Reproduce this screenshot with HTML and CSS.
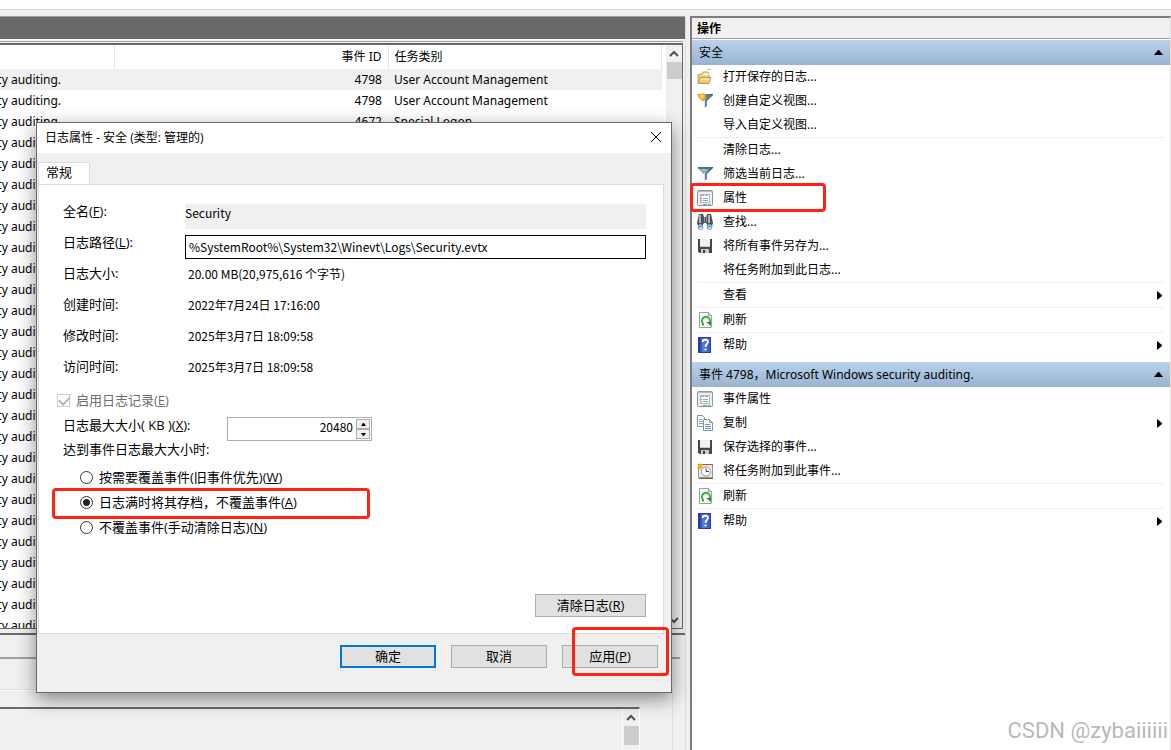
FILE: index.html
```html
<!DOCTYPE html>
<html lang="zh-CN">
<head>
<meta charset="utf-8">
<title>事件查看器</title>
<link rel="stylesheet" href="styles.css">
</head>
<body>
<svg class="defs" aria-hidden="true">
  <defs>
    <linearGradient id="steel" x1="0" x2="1"><stop offset="0" stop-color="#9fc0d4"/><stop offset=".45" stop-color="#6d92a9"/><stop offset="1" stop-color="#35566b"/></linearGradient>
    <linearGradient id="gold" x1="0" y1="0" x2="0" y2="1"><stop offset="0" stop-color="#fbe9a8"/><stop offset="1" stop-color="#e3b963"/></linearGradient>
    <linearGradient id="blue" x1="0" x2="1"><stop offset="0" stop-color="#2743a8"/><stop offset=".3" stop-color="#5b7fdc"/><stop offset="1" stop-color="#3a5cc4"/></linearGradient>
  </defs>
  <symbol id="i-open" viewBox="0 0 16 16"><path d="M1 14V6l1-1h3l1-2h5l1 2v3" fill="#ecd08a" stroke="#c9a55a"/><path d="M6 5l1-1h4l1 2H6z" fill="#fff7d8"/><path d="M1 14.500l2-6h11l-2 6z" fill="url(#gold)" stroke="#c29b50"/><path d="M10 .5h4" stroke="#7fe07f"/></symbol>
  <symbol id="i-funnel" viewBox="0 0 16 16"><path d="M0 1h16v1l-6 6v5l-3 2V8L0 2z" fill="url(#steel)"/><path d="M1 1h14l-1 2H2z" fill="#4f7385"/><path d="M3 3h9L8 7z" fill="#9bbccb"/><path d="M7.500 7v8" stroke="#d2e2ea"/></symbol>
  <symbol id="i-newview" viewBox="0 0 16 16"><path d="M0 1h16v1l-6 6v5l-3 2V8L0 2z" fill="url(#steel)"/><path d="M10 2h5l-4 4z" fill="#5d8294"/><path d="M7.500 7v8" stroke="#d2e2ea"/><path d="M1 1l3 0 2-1 2 1 1 3-1 3-2 1-3-2-2-2z" fill="#f5a91c"/><circle cx="5" cy="3.500" r="2" fill="#ffd447"/></symbol>
  <symbol id="i-props" viewBox="0 0 16 16"><rect x=".5" y=".5" width="15" height="15" rx="1" fill="#eceef0" stroke="#8f959a"/><path d="M1 1.500h14" stroke="#b6babf"/><rect x="3.500" y="4.500" width="9" height="8" fill="#fff" stroke="#b2b7bb"/><path d="M4 5.500h3M8 5.500h3" stroke="#a5abb0"/><path d="M4 8.500h1M4 10.500h1" stroke="#2ab6dc"/><path d="M6 8.500h5M6 10.500h5" stroke="#9aa2a8"/><path d="M6 14.500h4" stroke="#28c7f0"/><path d="M11 14.500h3" stroke="#a5abb0"/></symbol>
  <symbol id="i-find" viewBox="0 0 16 16"><path d="M2 0h4l1 3h2l1-3h4l2 9-1 3h-4l-2-3H7l-2 3H1l-1-3z" fill="#4c5157"/><path d="M3 1v8M12 1v8" stroke="#b1b6ba" stroke-width="2"/><path d="M7.500 3v5M9.500 3v5" stroke="#9299a0"/><circle cx="3.500" cy="13" r="2.500" fill="#dff3fc" stroke="#6b95ad"/><circle cx="12.500" cy="13" r="2.500" fill="#dff3fc" stroke="#6b95ad"/><path d="M2 13l3-1M11 13l3-1" stroke="#25a8df" stroke-width="1.500"/></symbol>
  <symbol id="i-save" viewBox="0 0 16 16"><path d="M1 1h14v14H3l-2-1z" fill="#44484b"/><path d="M3 1h10v8H3z" fill="#f1f2f2"/><path d="M3 8h10v1H3z" fill="#c6cacc"/><path d="M4 11h8v4H4z" fill="#c8cbcd"/><path d="M6 12h2v3H6z" fill="#393d40"/></symbol>
  <symbol id="i-refresh" viewBox="0 0 16 16"><path d="M2.500.5h9l3 3v12h-12z" fill="#f7f8f9" stroke="#9aa0a5"/><path d="M11.500.5v3h3" fill="#dde0e3" stroke="#9aa0a5"/><path d="M6 11.500a4 4 0 1 1 6 0" fill="none" stroke="#3ab33a" stroke-width="2"/><path d="M9 10h5v4z" fill="#239b2b"/><path d="M5 12.500h2" stroke="#239b2b" stroke-width="2"/></symbol>
  <symbol id="i-help" viewBox="0 0 16 16"><rect x="1" width="13" height="16" fill="#263f99"/><rect x="3" y="1" width="10" height="14" fill="url(#blue)"/><path d="M5.500 5c0-3 5.500-3 5.500 0 0 2-2.500 2-2.500 5" fill="none" stroke="#fff" stroke-width="1.800"/><circle cx="8.500" cy="12.500" r="1.100" fill="#fff"/></symbol>
  <symbol id="i-copy" viewBox="0 0 16 16"><path d="M.5.500h5l2 2v9h-7z" fill="#fff" stroke="#8c9298"/><path d="M2 4.500h3M2 6.500h4M2 8.500h4" stroke="#7ba2cf"/><path d="M6.500 4.500h6l3 3v8h-9z" fill="#fff" stroke="#8c9298"/><path d="M12.500 4.500v3h3" fill="none" stroke="#8c9298"/><path d="M8 9.500h5M8 11.500h6M8 13.500h6" stroke="#5f8fc7"/></symbol>
  <symbol id="i-task" viewBox="0 0 16 16"><rect x="1.500" y="1.500" width="14" height="13" fill="#eee6dc" stroke="#a59486"/><path d="M2 15.500h14" stroke="#716257"/><path d="M5 1.500h11" stroke="#b25236"/><circle cx="9" cy="8.500" r="4.500" fill="#fff" stroke="#8f9aa2"/><path d="M9 5.500v3h3" fill="none" stroke="#39434b"/><path d="M0 1l2 .5L3 0l1 1.500 2-.5-1 2 1 2-2 0-1 2-1-2-2 0 1-2z" fill="#f6a81e"/></symbol>
</svg>

<div class="app">
  <div class="toolbar"></div>
  <div class="panes">
    <main class="center">
      <div class="title-band"></div>
      <section class="list">
        <table class="events">
          <colgroup><col class="c-source"><col class="c-id"><col class="c-task"></colgroup>
          <thead><tr><th></th><th class="num">事件 ID</th><th>任务类别</th></tr></thead>
          <tbody>
            <tr class="current"><td><span class="src">ty auditing.</span></td><td class="num">4798</td><td>User Account Management</td></tr>
            <tr><td><span class="src">ty auditing.</span></td><td class="num">4798</td><td>User Account Management</td></tr>
            <tr><td><span class="src">ty auditing.</span></td><td class="num">4672</td><td>Special Logon</td></tr>
            <tr><td><span class="src">ty auditing.</span></td><td></td><td></td></tr>
            <tr><td><span class="src">ty auditing.</span></td><td></td><td></td></tr>
            <tr><td><span class="src">ty auditing.</span></td><td></td><td></td></tr>
            <tr><td><span class="src">ty auditing.</span></td><td></td><td></td></tr>
            <tr><td><span class="src">ty auditing.</span></td><td></td><td></td></tr>
            <tr><td><span class="src">ty auditing.</span></td><td></td><td></td></tr>
            <tr><td><span class="src">ty auditing.</span></td><td></td><td></td></tr>
            <tr><td><span class="src">ty auditing.</span></td><td></td><td></td></tr>
            <tr><td><span class="src">ty auditing.</span></td><td></td><td></td></tr>
            <tr><td><span class="src">ty auditing.</span></td><td></td><td></td></tr>
            <tr><td><span class="src">ty auditing.</span></td><td></td><td></td></tr>
            <tr><td><span class="src">ty auditing.</span></td><td></td><td></td></tr>
            <tr><td><span class="src">ty auditing.</span></td><td></td><td></td></tr>
            <tr><td><span class="src">ty auditing.</span></td><td></td><td></td></tr>
            <tr><td><span class="src">ty auditing.</span></td><td></td><td></td></tr>
            <tr><td><span class="src">ty auditing.</span></td><td></td><td></td></tr>
            <tr><td><span class="src">ty auditing.</span></td><td></td><td></td></tr>
            <tr><td><span class="src">ty auditing.</span></td><td></td><td></td></tr>
            <tr><td><span class="src">ty auditing.</span></td><td></td><td></td></tr>
            <tr><td><span class="src">ty auditing.</span></td><td></td><td></td></tr>
            <tr><td><span class="src">ty auditing.</span></td><td></td><td></td></tr>
            <tr><td><span class="src">ty auditing.</span></td><td></td><td></td></tr>
            <tr><td><span class="src">ty auditing.</span></td><td></td><td></td></tr>
            <tr><td><span class="src">ty auditing.</span></td><td></td><td></td></tr>
          </tbody>
        </table>
        <div class="scroll">
          <svg class="chev" viewBox="0 0 10 8"><path d="M1 6l4-4 4 4" /></svg>
          <div class="thumb"></div>
          <svg class="chev end" viewBox="0 0 10 8"><path d="M1 2l4 4 4-4" /></svg>
        </div>
      </section>
      <section class="detail">
        <div class="detail-title"></div>
        <div class="detail-tabs"></div>
        <div class="detail-page">
          <div class="detail-text">
            <div class="scroll">
              <svg class="chev" viewBox="0 0 10 8"><path d="M1 6l4-4 4 4" /></svg>
              <div class="thumb"></div>
            </div>
          </div>
        </div>
      </section>
    </main>

    <aside class="actions">
      <h2 class="actions-title">操作</h2>
      <section>
        <h3 class="group">安全<svg class="up" viewBox="0 0 9 5"><path d="M4 0h1l4 5H0z"/></svg></h3>
        <ul class="menu">
          <li><button class="item" type="button"><svg class="ico"><use href="#i-open"/></svg>打开保存的日志...</button></li>
          <li><button class="item" type="button"><svg class="ico"><use href="#i-newview"/></svg>创建自定义视图...</button></li>
          <li><button class="item" type="button"><span class="ico"></span>导入自定义视图...</button></li>
          <li class="sep"><button class="item" type="button"><span class="ico"></span>清除日志...</button></li>
          <li><button class="item" type="button"><svg class="ico"><use href="#i-funnel"/></svg>筛选当前日志...</button></li>
          <li class="marked"><button class="item" type="button"><svg class="ico"><use href="#i-props"/></svg>属性</button><span class="mark mark-props"></span></li>
          <li><button class="item" type="button"><svg class="ico"><use href="#i-find"/></svg>查找...</button></li>
          <li><button class="item" type="button"><svg class="ico"><use href="#i-save"/></svg>将所有事件另存为...</button></li>
          <li><button class="item" type="button"><span class="ico"></span>将任务附加到此日志...</button></li>
          <li class="sep"><button class="item" type="button"><span class="ico"></span>查看<svg class="right" viewBox="0 0 5 9"><path d="M0 0l5 4v1L0 9z"/></svg></button></li>
          <li class="sep"><button class="item" type="button"><svg class="ico"><use href="#i-refresh"/></svg>刷新</button></li>
          <li class="sep"><button class="item" type="button"><svg class="ico"><use href="#i-help"/></svg>帮助<svg class="right" viewBox="0 0 5 9"><path d="M0 0l5 4v1L0 9z"/></svg></button></li>
        </ul>
      </section>
      <section>
        <h3 class="group">事件 4798，Microsoft Windows security auditing.<svg class="up" viewBox="0 0 9 5"><path d="M4 0h1l4 5H0z"/></svg></h3>
        <ul class="menu">
          <li><button class="item" type="button"><svg class="ico"><use href="#i-props"/></svg>事件属性</button></li>
          <li><button class="item" type="button"><svg class="ico"><use href="#i-copy"/></svg>复制<svg class="right" viewBox="0 0 5 9"><path d="M0 0l5 4v1L0 9z"/></svg></button></li>
          <li><button class="item" type="button"><svg class="ico"><use href="#i-save"/></svg>保存选择的事件...</button></li>
          <li><button class="item" type="button"><svg class="ico"><use href="#i-task"/></svg>将任务附加到此事件...</button></li>
          <li class="sep"><button class="item" type="button"><svg class="ico"><use href="#i-refresh"/></svg>刷新</button></li>
          <li class="sep"><button class="item" type="button"><svg class="ico"><use href="#i-help"/></svg>帮助<svg class="right" viewBox="0 0 5 9"><path d="M0 0l5 4v1L0 9z"/></svg></button></li>
        </ul>
      </section>
    </aside>
  </div>

  <form class="dialog" role="dialog" aria-labelledby="dlg-title">
    <header class="dialog-bar">
      <h1 id="dlg-title">日志属性 - 安全 (类型: 管理的)</h1>
      <button class="close" type="button" aria-label="关闭"><svg viewBox="0 0 12 12"><path d="M1 1l10 10M11 1L1 11"/></svg></button>
    </header>
    <div class="tabs"><button class="tab" type="button">常规</button></div>
    <div class="page">
      <div class="fields">
        <label for="name">全名(<u>F</u>):</label>
        <input id="name" class="name" value="Security" readonly>
        <label for="path">日志路径(<u>L</u>):</label>
        <input id="path" class="path" value="%SystemRoot%\System32\Winevt\Logs\Security.evtx">
        <span>日志大小:</span><span class="value">20.00 MB(20,975,616 个字节)</span>
        <span>创建时间:</span><span class="value">2022年7月24日 17:16:00</span>
        <span>修改时间:</span><span class="value">2025年3月7日 18:09:58</span>
        <span>访问时间:</span><span class="value">2025年3月7日 18:09:58</span>
      </div>
      <label class="enable"><input class="check" type="checkbox" checked disabled><span>启用日志记录(<u>E</u>)</span></label>
      <div class="size">
        <label for="max">日志最大大小( KB )(<u>X</u>):</label>
        <div class="spin">
          <input id="max" value="20480">
          <div class="steps">
            <button type="button" aria-label="增加"><svg viewBox="0 0 5 3"><path d="M2 0h1l2 3H0z"/></svg></button>
            <button type="button" aria-label="减少"><svg viewBox="0 0 5 3"><path d="M0 0h5L3 3H2z"/></svg></button>
          </div>
        </div>
      </div>
      <p class="when">达到事件日志最大大小时:</p>
      <div class="choices">
        <label class="choice"><input type="radio" name="keep"><span>按需要覆盖事件(旧事件优先)(<u>W</u>)</span></label>
        <label class="choice"><input type="radio" name="keep" checked><span>日志满时将其存档，不覆盖事件(<u>A</u>)</span><span class="mark mark-keep"></span></label>
        <label class="choice"><input type="radio" name="keep"><span>不覆盖事件(手动清除日志)(<u>N</u>)</span></label>
      </div>
      <button class="btn clear" type="button">清除日志(<u>R</u>)</button>
    </div>
    <footer class="buttons">
      <button class="btn primary" type="button">确定</button>
      <button class="btn" type="button">取消</button>
      <span class="apply"><button class="btn" type="button">应用(<u>P</u>)</button><span class="mark mark-apply"></span></span>
    </footer>
  </form>

  <div class="watermark">CSDN @zybaiiiiii</div>
</div>
</body>
</html>
```
FILE: styles.css
```css
* { box-sizing: border-box; }

body {
  margin: 0;
  background: #fff;
  color: #000;
  font: 12px/16px "Noto Sans", "Noto Sans CJK SC", sans-serif;
}

button, input { font: inherit; color: inherit; margin: 0; }
h1, h2, h3, p, ul { margin: 0; padding: 0; font-size: inherit; font-weight: normal; }
ul { list-style: none; }
button { border: 0; background: none; padding: 0; }
.defs { position: absolute; width: 0; height: 0; }

.app {
  position: relative;
  display: flex;
  flex-direction: column;
  height: 100vh;
  overflow: hidden;
  background: #f0f0f0;
}

.toolbar { flex: none; height: 10px; background: #fff; border-bottom: 1px solid #d9d9d9; }

.panes {
  flex: 1;
  min-height: 0;
  display: grid;
  grid-template-columns: 690fr 481fr;
  padding-top: 6px;
}

/* centre pane */
.center {
  display: flex;
  flex-direction: column;
  min-width: 0;
  min-height: 0;
  margin-right: 4px;
  border-right: 1px solid #dcdcdc;
}

.title-band {
  flex: none;
  height: 24px;
  background: #696969;
  border-top: 1px solid #a0a0a0;
  border-bottom: 1px solid #fff;
}

.list {
  flex: 588;
  min-height: 0;
  display: flex;
  margin: 3px 2px 0 0;
  border: solid #696969;
  border-width: 2px 1px 1px 0;
  box-shadow: 0 -1px #f0f0f0, 0 -2px #a0a0a0;
  background: #fff;
  overflow: hidden;
}

.events {
  flex: 1;
  align-self: flex-start;
  margin-right: 4px;
  table-layout: fixed;
  border-collapse: collapse;
}
.c-source { width: 114px; }
.c-id { width: 274px; }
.events th { height: 24px; padding: 0 6px; text-align: left; font-weight: normal; border-right: 1px solid #e5e5e5; }
.events td { height: 21px; padding: 0 6px; white-space: nowrap; }
.events td:first-child { padding: 0; }
.events .num { text-align: right; }
.events .current { background: #f0f0f0; }
.src { display: flex; justify-content: flex-end; width: 61px; }

.scroll {
  flex: none;
  display: flex;
  flex-direction: column;
  align-items: center;
  width: 16px;
  background: #f0f0f0;
}
.chev { width: 10px; height: 8px; margin: 5px 0 4px; fill: none; stroke: #505050; stroke-width: 2; }
.chev.end { margin-top: auto; }
.thumb { width: 15px; height: 17px; background: #cdcdcd; }

.detail {
  flex: 116;
  display: flex;
  flex-direction: column;
  min-height: 0;
  margin-top: 4px;
  border-top: 2px solid #696969;
}
.detail-title { flex: none; height: 24px; margin-right: 5px; border-bottom: 2px solid #a0a0a0; }
.detail-tabs { flex: none; height: 31px; margin-right: 12px; border-bottom: 1px solid #dcdcdc; }
.detail-page { flex: 1; margin-right: 12px; padding: 16px 32px 0 0; border-right: 1px solid #dcdcdc; border-top: 1px solid #fff; }
.detail-text { display: flex; justify-content: flex-end; height: 100%; border-top: 2px solid #696969; border-right: 1px solid #fff; }
.detail-text .scroll { margin-left: auto; width: 17px; border-left: 1px solid #fff; }
.detail-text .thumb { height: 19px; }

/* actions pane */
.actions {
  min-width: 0;
  background: #fff;
  border: solid #7c7c7c;
  border-width: 2px 0 0 2px;
  border-right: 1px solid #e3e3e3;
}
.actions-title {
  height: 21px;
  padding: 3px 5px 0;
  font-weight: bold;
  line-height: 16px;
  background: #f0f0f0;
  border-bottom: 1px solid #a0a0a0;
  margin-bottom: 1px;
}
.group {
  display: flex;
  align-items: center;
  justify-content: space-between;
  height: 25px;
  padding: 0 7px;
  background: linear-gradient(#bad2eb, #98b3d2);
}
.up { width: 9px; height: 5px; }
.menu { padding: 0 5px; }
.actions section + section { margin-top: 5px; }
.sep { border-top: 1px solid #f0f0f0; }
.item { display: flex; align-items: center; width: 100%; height: 24px; text-align: left; }
.ico { flex: none; width: 16px; height: 16px; margin-right: 10px; }
.right { width: 5px; height: 9px; margin-left: auto; margin-right: 3px; }
.marked { position: relative; }

/* red annotation frames */
.mark { position: absolute; border: 3px solid #ff2316; border-radius: 4px; pointer-events: none; }
.mark-props { left: -7px; top: -3px; width: 136px; height: 29px; }
.mark-keep { left: -28px; top: -2px; width: 318px; height: 31px; }
.mark-apply { left: 10px; top: -18px; width: 97px; height: 49px; }

/* properties dialog */
.dialog {
  position: absolute;
  left: 36px;
  top: 122px;
  width: 636px;
  display: flex;
  flex-direction: column;
  background: #f0f0f0;
  border: 1px solid #6a6a6a;
  box-shadow: 0 6px 18px rgba(0, 0, 0, .45);
  font: 12px/16px "Open Sans", "Noto Sans CJK SC", sans-serif;
}
.dialog-bar { display: flex; align-items: center; justify-content: space-between; height: 30px; padding: 0 9px 0 8px; background: #fff; }
.close { display: flex; padding: 0 0 2px; }
.close svg { width: 12px; height: 12px; fill: none; stroke: #000; }
.tabs { height: 31px; padding: 9px 1px 0; font-size: 13px; }
.tab { width: 52px; height: 22px; padding: 0 7px 4px; text-align: left; background: #fff; border: 1px solid #dcdcdc; border-bottom: 0; }
.page {
  display: flex;
  flex-direction: column;
  margin: 0 7px 0 1px;
  padding: 19px 17px 16px 24px;
  background: #fff;
  border: 1px solid #dcdcdc;
  font-size: 13px;
  line-height: 14px;
}
.fields { display: grid; grid-template-columns: 122px 1fr; grid-auto-rows: 31px; align-items: start; }
.fields input { width: 100%; border: 0; border-radius: 0; outline: 0; font-size: 12px; }
.fields .name { height: 25px; padding: 0 0 9px; background: #f0f0f0; }
.fields .path { height: 24px; padding: 0 3px 2px; border: 1px solid #000; background: #fff; }
.value { padding-left: 3px; font-size: 12px; line-height: 16px; }
.fields input, .value, .spin input { font-family: "Noto Sans CJK SC", sans-serif; }

.enable { display: flex; align-items: center; gap: 6px; height: 16px; margin: 2px 0 0 -6px; color: #6d6d6d; }
.check { appearance: none; width: 13px; height: 13px; border: 1px solid #ccc; background: #fff; }
.check:checked::before { content: ""; display: block; width: 9px; height: 5px; margin: 1px; border: solid #b5b5b5; border-width: 0 0 2px 2px; transform: rotate(-45deg); }
.size { display: flex; align-items: flex-start; margin-top: 9px; }
.size label { width: 164px; line-height: 16px; }
.spin { display: flex; width: 145px; height: 24px; border: 1px solid #abadb3; }
.spin input { flex: 1; min-width: 0; border: 0; outline: 0; padding: 0 2px 4px; text-align: right; font-size: 12px; }
.steps { display: flex; flex-direction: column; width: 16px; padding: 1px; }
.steps button { display: flex; align-items: center; justify-content: center; height: 10px; background: #f0f0f0; border: 1px solid #adadad; }
.steps svg { width: 5px; height: 3px; }
.when { height: 16px; margin-top: 1px; }
.choices { display: flex; flex-direction: column; padding: 7px 0 0 17px; }
.choice { position: relative; align-self: flex-start; display: flex; align-items: center; gap: 6px; height: 25px; }
.choice span:not(.mark) { padding-bottom: 2px; }
.choice input { appearance: none; width: 13px; height: 13px; border: 1px solid #333; border-radius: 50%; background: #fff; }
.choice input:checked { background: radial-gradient(circle, #222 0 3px, #fff 4px); }

.btn { width: 96px; height: 23px; padding-bottom: 2px; background: #e1e1e1; border: 1px solid #adadad; font-size: 13px; line-height: 16px; }
.btn.primary { border: 2px solid #0078d7; }
.btn.clear { align-self: flex-end; width: 111px; margin-top: 54px; }
.buttons { display: flex; justify-content: flex-end; gap: 15px; padding: 11px 13px 24px; }
.apply { position: relative; display: flex; }

.watermark {
  position: absolute;
  right: 3px;
  bottom: 6px;
  color: #b9b9b9;
  font: 22px/26px Roboto, sans-serif;
}
```
